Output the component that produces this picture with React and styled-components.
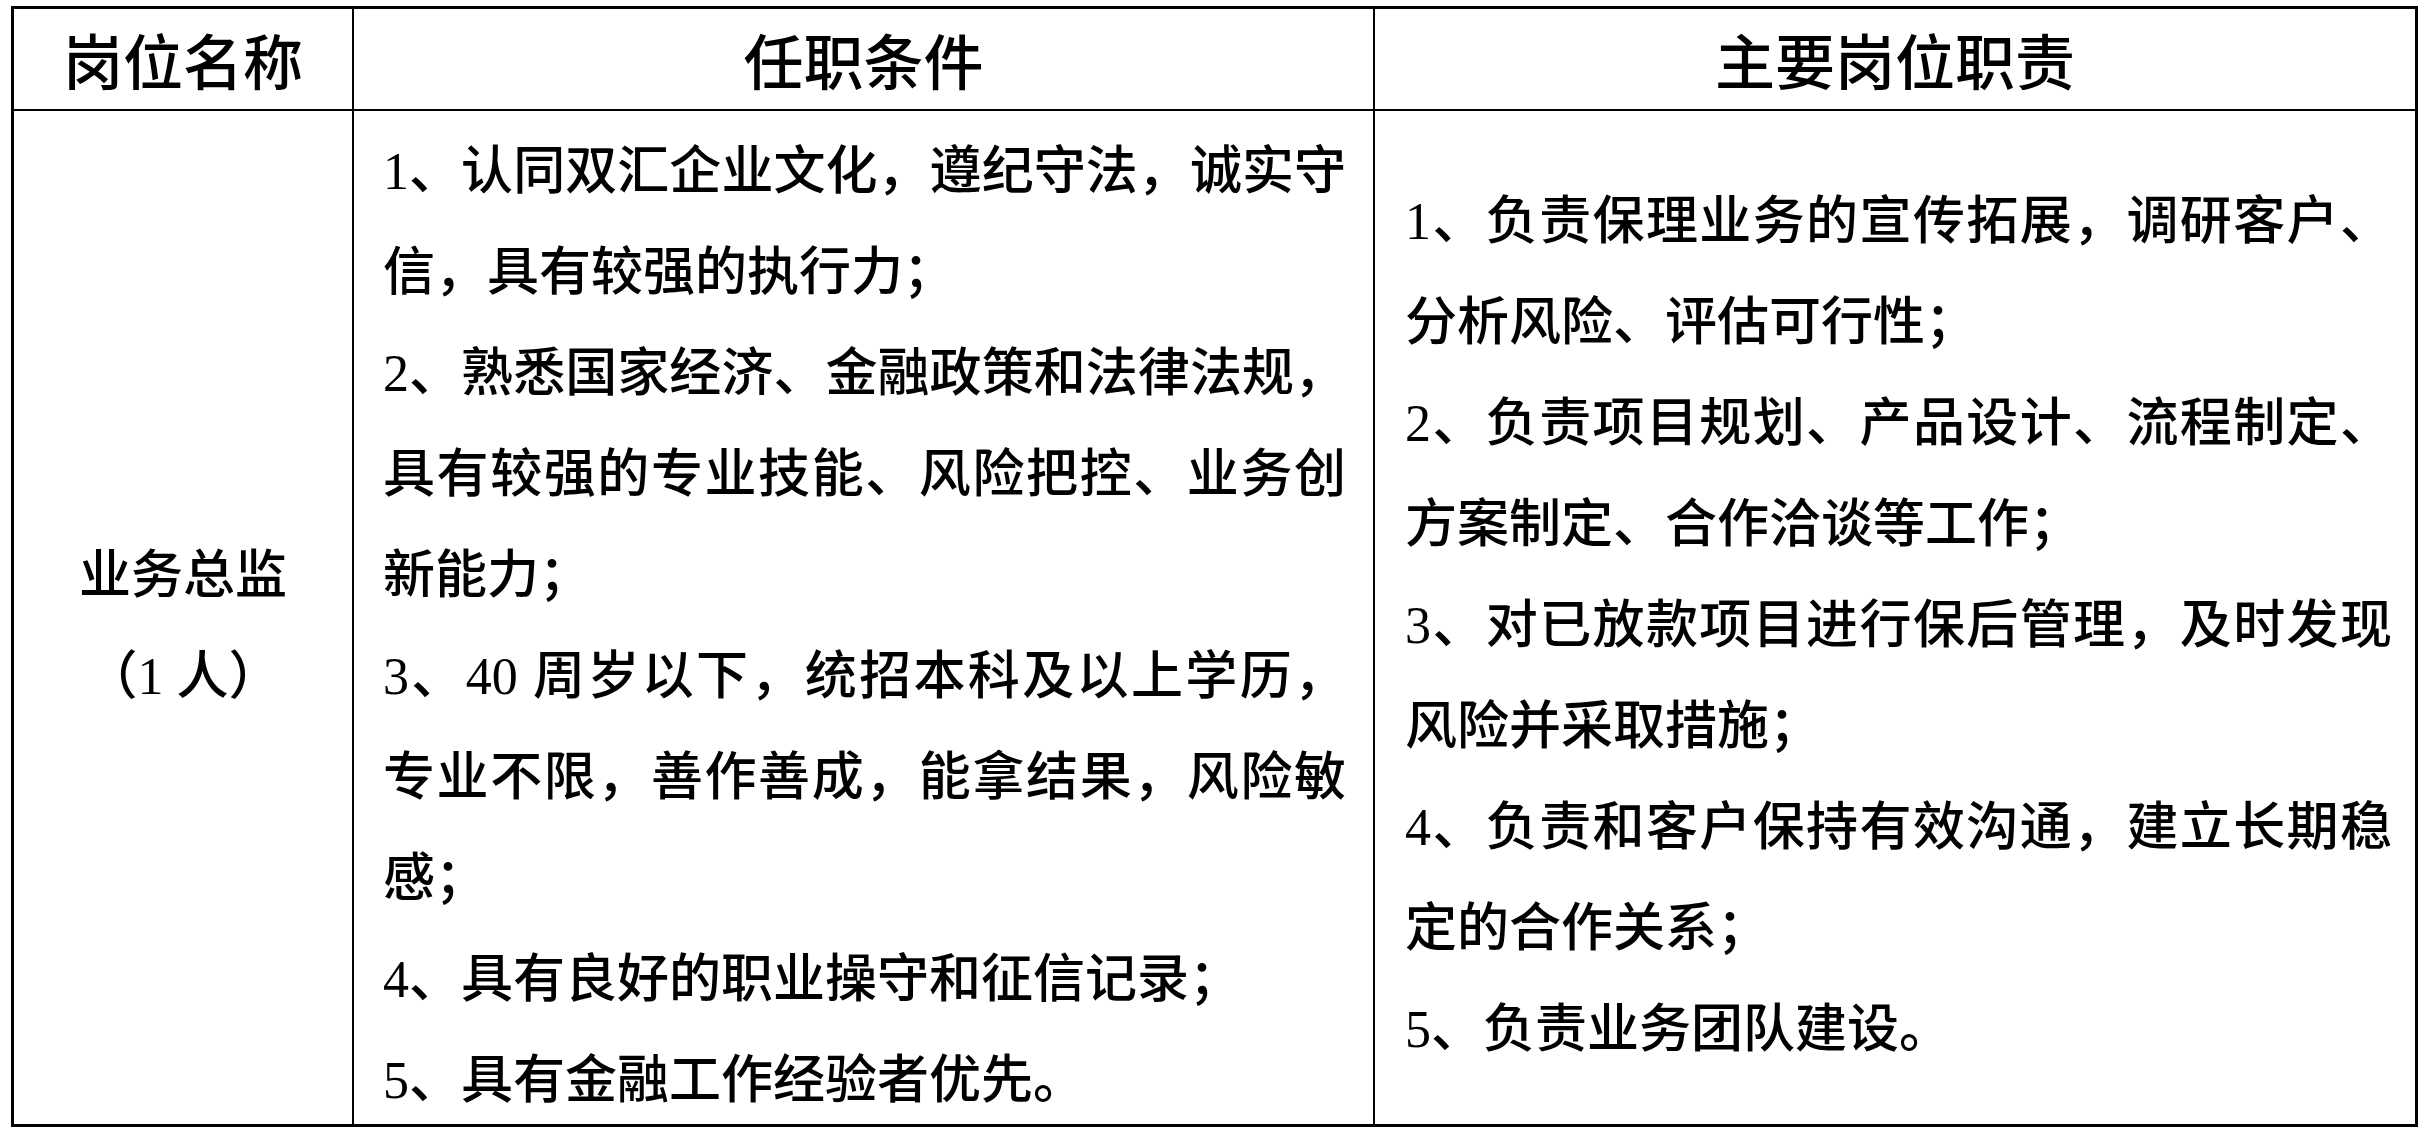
import React from "react";
import styled, { createGlobalStyle } from "styled-components";

const GlobalStyle = createGlobalStyle`
    html, body {
        margin: 0;
        padding: 0;
        background: #ffffff;
    }
`;

const cabecalho = ["岗位名称", "任职条件", "主要岗位职责"];

const cargo = ["业务总监", "（1 人）"];

const condicoes = [
    ["1、认同双汇企业文化，遵纪守法，诚实守", "信，具有较强的执行力；"],
    ["2、熟悉国家经济、金融政策和法律法规，", "具有较强的专业技能、风险把控、业务创", "新能力；"],
    ["3、40 周岁以下，统招本科及以上学历，", "专业不限，善作善成，能拿结果，风险敏", "感；"],
    ["4、具有良好的职业操守和征信记录；"],
    ["5、具有金融工作经验者优先。"],
];

const deveres = [
    ["1、负责保理业务的宣传拓展，调研客户、", "分析风险、评估可行性；"],
    ["2、负责项目规划、产品设计、流程制定、", "方案制定、合作洽谈等工作；"],
    ["3、对已放款项目进行保后管理，及时发现", "风险并采取措施；"],
    ["4、负责和客户保持有效沟通，建立长期稳", "定的合作关系；"],
    ["5、负责业务团队建设。"],
];

function Paragrafos({ itens }) {
    return itens.map((linhas, i) =>
        linhas.map((linha, j) => (
            <Linha key={i + "-" + j} $justificar={j < linhas.length - 1}>
                {linha}
            </Linha>
        ))
    );
}

function App() {
    return (
        <Pagina>
            <GlobalStyle />
            <Tabela>
                {cabecalho.map((titulo, i) => (
                    <CelulaCabecalho key={titulo} $primeira={i === 0}>
                        {titulo}
                    </CelulaCabecalho>
                ))}
                <CelulaCargo>
                    {cargo.map((t) => (
                        <LinhaCargo key={t}>{t}</LinhaCargo>
                    ))}
                </CelulaCargo>
                <CelulaTexto $esq={29} $dir={27}>
                    <Paragrafos itens={condicoes} />
                </CelulaTexto>
                <CelulaTexto $esq={30} $dir={23}>
                    <Paragrafos itens={deveres} />
                </CelulaTexto>
            </Tabela>
        </Pagina>
    );
}

const Pagina = styled.div`
    padding: 6px 0 0 11px;
    font-family: "Liberation Serif", "Noto Sans CJK SC", serif;
    font-weight: 500;
    color: #000000;
    text-autospace: no-autospace;
`;

const Tabela = styled.div`
    box-sizing: border-box;
    width: 2407px;
    height: 1121px;
    border: 3px solid #000000;
    display: grid;
    grid-template-columns: 338px 1021px 1fr;
    grid-template-rows: 100px 1015px;
`;

const CelulaCabecalho = styled.div`
    box-sizing: border-box;
    border-left: ${(p) => (p.$primeira ? "none" : "2px solid #000000")};
    display: flex;
    align-items: center;
    justify-content: center;
    padding-top: 11px;
    font-size: 60px;
    line-height: 80px;
    white-space: nowrap;
`;

const CelulaCorpo = styled.div`
    box-sizing: border-box;
    border-top: 2px solid #000000;
    display: flex;
    flex-direction: column;
    justify-content: center;
    padding-top: 16px;
    min-height: 0;
    font-size: 52px;
    line-height: 101px;
`;

const CelulaCargo = styled(CelulaCorpo)`
    align-items: center;
`;

const CelulaTexto = styled(CelulaCorpo)`
    border-left: 2px solid #000000;
    padding-left: ${(p) => p.$esq}px;
    padding-right: ${(p) => p.$dir}px;
`;

const LinhaCargo = styled.div`
    white-space: nowrap;
`;

const Linha = styled.div`
    white-space: nowrap;
    text-align: ${(p) => (p.$justificar ? "justify" : "left")};
    text-align-last: ${(p) => (p.$justificar ? "justify" : "left")};
`;

export default App;
